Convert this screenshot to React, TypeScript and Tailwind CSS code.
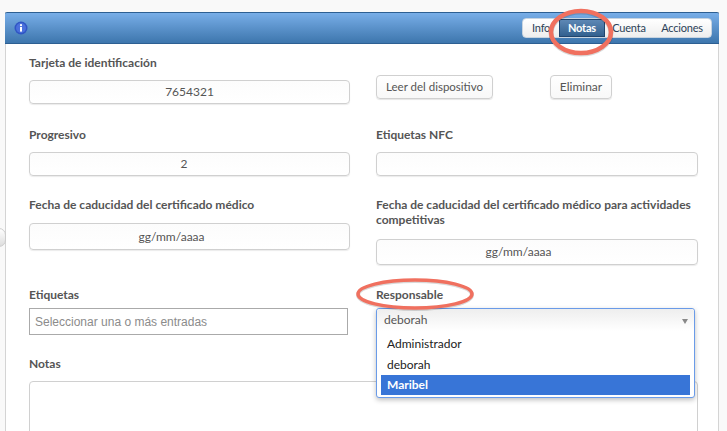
const font = "font-['Lato','Noto_Sans',sans-serif]";

function Label({ children, className = '' }: { children: React.ReactNode; className?: string }) {
  return <div className={`text-[12px] leading-[15px] font-bold text-[#555] ${className}`}>{children}</div>;
}

function Field({ value, className = '' }: { value?: string; className?: string }) {
  return (
    <div className={`w-full flex items-center justify-center rounded-[4px] border border-[#d0d0d0] bg-gradient-to-b from-[#fcfcfc] to-white text-[12px] text-[#555] shadow-[0_1px_1px_rgba(0,0,0,0.08)] ${className}`}>
      {value}
    </div>
  );
}

function Btn({ children, className = '' }: { children: React.ReactNode; className?: string }) {
  return (
    <div className={`h-[24px] flex items-center justify-center rounded-[4px] border border-[#d0d0d0] bg-gradient-to-b from-white to-[#f8f8f8] text-[#555] shadow-[0_1px_1px_rgba(0,0,0,0.1)] ${className}`}>
      {children}
    </div>
  );
}

function InfoIcon() {
  return (
    <svg width="14" height="14" viewBox="0 0 14 14">
      <circle cx="7" cy="7" r="6.5" fill="#2f55c4" />
      <circle cx="7" cy="7" r="5" fill="#4a70dc" />
      <rect x="6" y="6" width="2" height="4.6" fill="#fff" />
      <circle cx="7" cy="4.2" r="1.1" fill="#fff" />
    </svg>
  );
}

export default function App() {
  return (
    <div className={`relative w-[727px] h-[431px] overflow-hidden bg-[#f9f9f9] pt-[12px] pl-[5px] pr-[8px] ${font}`}>
      <div className="relative h-[419px] bg-white border-x border-[#d4d4d4]">
        {/* title bar */}
        <div className="relative -mx-px h-[32px] flex items-center justify-between rounded-t-[2px] border-y border-[#2d5f92] bg-gradient-to-b from-[#78aee8] to-[#3d76ad] pl-[9px] pr-[7px]">
          <InfoIcon />
          <div className="flex h-[20px] items-center rounded-[4px] border border-[#c8d4e0] bg-gradient-to-b from-white to-[#eeeeee] text-[11px] tracking-[-0.2px] text-[#2b3f57]">
            <div className="w-[36px] pl-[9px]">Info</div>
            <div className="w-[46px] h-[18px] flex items-center justify-center border border-[#20456e] bg-gradient-to-b from-[#5d88b5] to-[#33618f] font-bold text-white">Notas</div>
            <div className="w-[48px] text-center">Cuenta</div>
            <div className="w-[58px] text-center">Acciones</div>
          </div>
        </div>

        {/* form */}
        <div className="grid grid-cols-[321px_322px] gap-x-[26px] pl-[23px]">
          <div className="pt-[11px]">
            <Label>Tarjeta de identificación</Label>
            <Field value="7654321" className="h-[24px] mt-[10px]" />
          </div>
          <div className="pt-[31px] flex gap-[57px]">
            <Btn className="w-[117px] text-[11.5px]">Leer del dispositivo</Btn>
            <Btn className="w-[62px] text-[12px]">Eliminar</Btn>
          </div>

          <div className="pt-[23px]">
            <Label>Progresivo</Label>
            <Field value="2" className="h-[24px] mt-[10px] pr-[11px]" />
          </div>
          <div className="pt-[23px]">
            <Label>Etiquetas NFC</Label>
            <Field className="h-[24px] mt-[10px]" />
          </div>

          <div className="pt-[21px]">
            <Label>Fecha de caducidad del certificado médico</Label>
            <Field value="gg/mm/aaaa" className="h-[27px] mt-[11px] pr-[36px] text-[11.5px]" />
          </div>
          <div className="pt-[21px]">
            <Label>Fecha de caducidad del certificado médico para actividades competitivas</Label>
            <Field value="gg/mm/aaaa" className="h-[26px] mt-[12px] pr-[37px] text-[11.5px]" />
          </div>

          <div className="pt-[22px]">
            <Label>Etiquetas</Label>
            <div className="w-[319px] h-[27px] mt-[6px] flex items-center border border-[#aaa] bg-white pl-[5px] font-['Liberation_Sans',sans-serif] text-[12px] text-[#8b8b8b]">
              Seleccionar una o más entradas
            </div>
          </div>
          <div className="pt-[22px]">
            <Label>Responsable</Label>
          </div>
        </div>

        <div className="pl-[23px] pt-[21px]">
          <Label>Notas</Label>
          <div className="w-[669px] h-[80px] mt-[10px] rounded-[4px] border border-[#d0d0d0] bg-white" />
        </div>

        {/* open dropdown */}
        <div className="absolute left-[370px] top-[296px] w-[319px] h-[90px] rounded-[3px] border border-[#6a9be8] bg-white shadow-[0_2px_5px_rgba(0,0,0,0.25)] px-[4px] text-[12px]">
          <div className="relative -mx-[4px] h-[22px] flex items-center rounded-t-[3px] bg-gradient-to-b from-[#eeeeee] to-white pl-[7px] text-[#555]">
            deborah
            <div className="absolute right-[6px] top-[10px] w-0 h-0 border-x-[3px] border-t-[5px] border-x-transparent border-t-[#888]" />
          </div>
          <div className="h-[20px] mt-[3px] flex items-center pl-[6px] text-[#222]">Administrador</div>
          <div className="h-[21px] flex items-center pl-[6px] text-[#222]">deborah</div>
          <div className="h-[20px] flex items-center pl-[6px] font-bold text-white bg-[#3875d7]">Maribel</div>
        </div>
      </div>

      {/* side handle */}
      <div className="absolute left-[-8px] top-[228px] w-[14px] h-[19px] rounded-full border border-[#ccc] bg-gradient-to-b from-white to-[#ddd]" />

      {/* red marks drawn over the screenshot */}
      <svg className="absolute left-0 top-0 pointer-events-none" width="727" height="431">
        <ellipse cx="581" cy="33" rx="30" ry="21" fill="none" stroke="rgba(0,0,0,0.15)" strokeWidth="5" />
        <ellipse cx="581" cy="32" rx="30" ry="21" fill="none" stroke="#f0705f" strokeWidth="4.5" />
        <ellipse cx="415" cy="295" rx="57" ry="14" fill="none" stroke="rgba(0,0,0,0.15)" strokeWidth="4" />
        <ellipse cx="415" cy="294" rx="57" ry="14" fill="none" stroke="#f0705f" strokeWidth="3.5" />
      </svg>
    </div>
  );
}
